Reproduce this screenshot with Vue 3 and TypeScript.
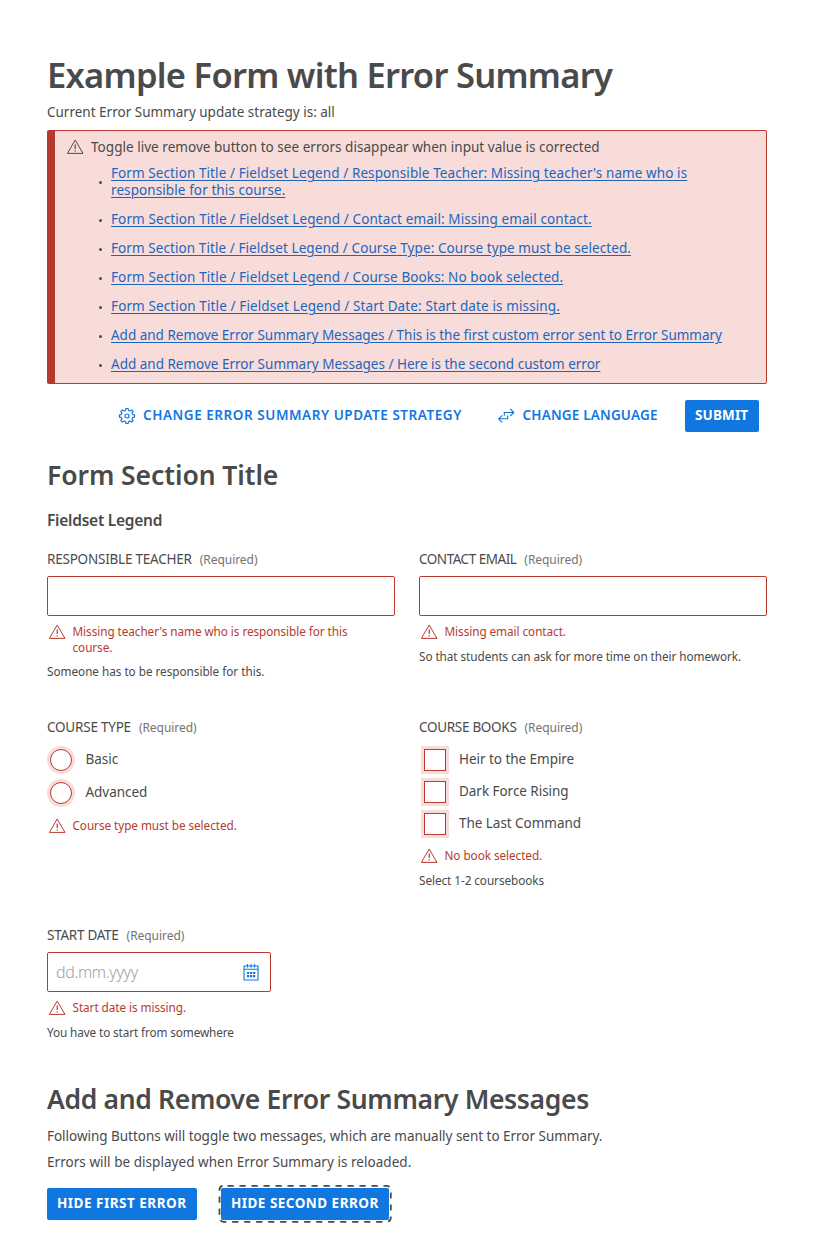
<script setup lang="ts">
import { defineComponent, h } from 'vue'

interface Summary { text: string; cls: string }

const WarnIcon = defineComponent({
  render: () =>
    h('svg', { class: 'warn', viewBox: '0 0 18 16', width: 18, height: 16, fill: 'none', stroke: 'currentColor' }, [
      h('path', { d: 'M9.2 1 L17 14.4 H1.4 Z', 'stroke-linejoin': 'round', 'stroke-width': 1 }),
      h('path', { d: 'M9.2 5.6 V10 M9.2 11.2 V12.6', 'stroke-width': 1.2 }),
    ]),
})

// Eight-tooth cog outline centred on (9, 9).
function cogPath(): string {
  const pt = (r: number, deg: number): string => {
    const a = (deg * Math.PI) / 180
    return `${(9 + r * Math.cos(a)).toFixed(2)} ${(9 + r * Math.sin(a)).toFixed(2)}`
  }
  const parts: string[] = []
  for (let i = 0; i < 8; i++) {
    const c = i * 45
    parts.push(`${i === 0 ? 'M' : 'L'}${pt(6, c - 13)} L${pt(7.6, c - 9)} L${pt(7.6, c + 9)} L${pt(6, c + 13)} Q${pt(5.4, c + 22.5)} ${pt(6, c + 32)}`)
  }
  return parts.join(' ') + ' Z'
}
const cog = cogPath()

const prefix = 'Form Section Title / Fieldset Legend / '
const custom = 'Add and Remove Error Summary Messages / '
const messages: Summary[] = [
  { text: prefix + "Responsible Teacher: Missing teacher's name who is responsible for this course.", cls: 'm1' },
  { text: prefix + 'Contact email: Missing email contact.', cls: 'm2' },
  { text: prefix + 'Course Type: Course type must be selected.', cls: 'm3' },
  { text: prefix + 'Course Books: No book selected.', cls: 'm4' },
  { text: prefix + 'Start Date: Start date is missing.', cls: 'm5' },
  { text: custom + 'This is the first custom error sent to Error Summary', cls: 'm6' },
  { text: custom + 'Here is the second custom error', cls: 'm7' },
]
const courseTypes: string[] = ['Basic', 'Advanced']
const books: string[] = ['Heir to the Empire', 'Dark Force Rising', 'The Last Command']
</script>

<template>
  <main class="page">
    <h1>Example Form with Error Summary</h1>
    <p class="strategy">Current Error Summary update strategy is: all</p>

    <section class="summary">
      <div class="summary-title"><WarnIcon /><span>Toggle live remove button to see errors disappear when input value is corrected</span></div>
      <ul>
        <li v-for="m in messages" :key="m.cls"><a href="#" :class="m.cls">{{ m.text }}</a></li>
      </ul>
    </section>

    <div class="actions">
      <button class="link strategy-btn">
        <svg width="18" height="18" viewBox="0 0 18 18" fill="none" stroke="currentColor" stroke-width="1.2" stroke-linejoin="round">
          <path :d="cog" />
          <circle cx="9" cy="9" r="2" />
        </svg>
        <span>CHANGE ERROR SUMMARY UPDATE STRATEGY</span>
      </button>
      <button class="link language-btn">
        <svg width="18" height="16" viewBox="0 0 18 16" fill="none" stroke="currentColor" stroke-width="1.1">
          <path d="M6.3 7.700V4.500H15.700M12.300 1L15.800 4.500L12.300 8M9.700 7.500V10.800H.900M4.200 7.300L.700 10.800L4.200 14.300" />
        </svg>
        <span>CHANGE LANGUAGE</span>
      </button>
      <button class="primary submit"><span>SUBMIT</span></button>
    </div>

    <h2 class="section-title">Form Section Title</h2>
    <h3>Fieldset Legend</h3>

    <div class="grid">
      <div class="field teacher">
        <label><span class="name">RESPONSIBLE TEACHER</span><span class="req">(Required)</span></label>
        <input class="box" type="text" />
        <div class="error"><WarnIcon /><span>Missing teacher's name who is responsible for this course.</span></div>
        <p class="help">Someone has to be responsible for this.</p>
      </div>
      <div class="field email">
        <label><span class="name">CONTACT EMAIL</span><span class="req">(Required)</span></label>
        <input class="box" type="text" />
        <div class="error"><WarnIcon /><span>Missing email contact.</span></div>
        <p class="help">So that students can ask for more time on their homework.</p>
      </div>
      <div class="field type">
        <label><span class="name">COURSE TYPE</span><span class="req">(Required)</span></label>
        <div class="radios">
          <div v-for="t in courseTypes" :key="t" class="choice"><i class="radio"></i><span>{{ t }}</span></div>
        </div>
        <div class="error"><WarnIcon /><span>Course type must be selected.</span></div>
      </div>
      <div class="field books">
        <label><span class="name">COURSE BOOKS</span><span class="req">(Required)</span></label>
        <div class="checks">
          <div v-for="b in books" :key="b" class="choice"><i class="check"></i><span>{{ b }}</span></div>
        </div>
        <div class="error"><WarnIcon /><span>No book selected.</span></div>
        <p class="help">Select 1-2 coursebooks</p>
      </div>
      <div class="field date">
        <label><span class="name">START DATE</span><span class="req">(Required)</span></label>
        <div class="box date-box">
          <input type="text" placeholder="dd.mm.yyyy" />
          <svg width="16" height="18" viewBox="0 0 16 18" fill="none" stroke="currentColor">
            <path d="M1 3H15V17H1zM1 6.300H15M4.500 1V4.500M8 1V4.500M11.500 1V4.500" stroke-width="1.100" />
            <path d="M4 10h2.200m.8 0h2.200m.8 0h2.200M4 13.200h2.200m.8 0h2.200m.8 0h2.200" stroke-width="2.200" />
          </svg>
        </div>
        <div class="error"><WarnIcon /><span>Start date is missing.</span></div>
        <p class="help">You have to start from somewhere</p>
      </div>
    </div>

    <h2 class="toggle-title">Add and Remove Error Summary Messages</h2>
    <p class="para p1">Following Buttons will toggle two messages, which are manually sent to Error Summary.</p>
    <p class="para p2">Errors will be displayed when Error Summary is reloaded.</p>
    <div class="toggles">
      <button class="primary first"><span>HIDE FIRST ERROR</span></button>
      <button class="primary second">
        <span>HIDE SECOND ERROR</span>
        <svg class="focus" width="174" height="40" viewBox="0 0 174 40" fill="none" stroke="#4a4a4a" stroke-width="1.8">
          <rect x="1.5" y="1.800" width="171.300" height="36" rx="4" stroke-dasharray="6.200 5.800" stroke-dashoffset="-4" />
        </svg>
      </button>
    </div>
  </main>
</template>

<style>
body { background: #fff; }
</style>

<style scoped>
* { box-sizing: border-box; }
.page { width: 814px; height: 1252px; padding: 54px 47px 0; color: #4a4a4a; font: 400 13.5px/18px "Noto Sans", sans-serif; overflow: hidden; white-space: nowrap; }
h1, h2, h3, p, ul { margin: 0; padding: 0; }
h1 { height: 44px; font-size: 34.5px; line-height: 42px; font-weight: 600; letter-spacing: -0.73px; }
.strategy { margin-top: 5px; height: 27px; }
.summary { height: 254px; border: 1px solid #b83a2e; border-left-width: 8px; border-radius: 2px; background: #f8dcd9; padding: 7px 0 0 11px; }
.summary-title { display: flex; align-items: center; gap: 7px; height: 18px; letter-spacing: 0.035px; }
.summary ul { list-style: none; margin-top: 9px; padding-left: 45px; }
.summary li { position: relative; width: 640px; white-space: normal; line-height: 17px; margin-bottom: 12px; }
.summary li::before { content: ""; position: absolute; left: -12px; top: calc(50% - 1px); width: 3px; height: 3px; border-radius: 50%; background: #4a4a4a; }
.summary a { color: #1c66bd; text-decoration: underline; text-underline-offset: 2px; text-decoration-thickness: 1px; }
.m2, .m4 { letter-spacing: 0.105px; }
.m1 { letter-spacing: 0.09px; }
.m3 { letter-spacing: 0.08px; }
.m5 { letter-spacing: 0.12px; }
.m6 { letter-spacing: -0.01px; }
button { border: 0; background: none; padding: 0; font: 600 13.5px/32px "Noto Sans", sans-serif; }
button span { line-height: 30px; display: block; height: 32px; }
.actions { display: flex; justify-content: flex-end; margin-top: 16px; padding-right: 8px; height: 32px; }
.link { display: flex; align-items: center; color: #1177e0; text-align: left; }
.strategy-btn { width: 345px; gap: 7px; letter-spacing: 0.55px; }
.language-btn { margin-left: 35px; width: 161px; gap: 6.5px; letter-spacing: 0.18px; }
.primary { height: 32px; border-radius: 2px; background: #1177e0; color: #fff; font-weight: 700; text-align: left; padding-left: 10px; }
.submit { width: 74px; margin-left: 26px; letter-spacing: 0.15px; }
h2 { font-size: 26.5px; line-height: 36px; font-weight: 600; }
.section-title { margin-top: 25px; letter-spacing: -0.07px; }
h3 { margin-top: 17px; font-size: 15.5px; line-height: 20px; font-weight: 600; letter-spacing: -0.24px; }
.grid { display: grid; grid-template-columns: 348px 348px; column-gap: 24px; grid-template-rows: 168px 208px 148px; margin-top: 19px; }
label { display: flex; align-items: center; gap: 8px; height: 20px; }
.name { letter-spacing: -0.22px; }
.email .name { letter-spacing: -0.48px; }
.books .name { letter-spacing: -0.3px; }
.date .name { letter-spacing: -0.27px; }
.req { font-size: 12px; color: #737373; padding-top: 1px; letter-spacing: -0.05px; }
.box { display: block; width: 100%; height: 40px; margin-top: 7px; border: 1px solid #b83a2e; border-radius: 2px; background: #fff; }
.error { display: flex; align-items: flex-start; gap: 6.5px; color: #b83a2e; font-size: 11.75px; line-height: 16px; margin-top: 7px; padding-left: 1px; letter-spacing: -0.06px; }
.error span { white-space: normal; max-width: 290px; }
.error .warn { margin: 1px 0 0 -0.5px; flex: none; }
.error span { padding-left: 0.5px; }
.help { font-size: 11.75px; line-height: 16px; margin-top: 8px; letter-spacing: -0.06px; }
.teacher .help { letter-spacing: -0.03px; }
.date .help { letter-spacing: -0.11px; }
.choice { display: flex; align-items: center; }
.choice span { margin-top: -2px; letter-spacing: -0.04px; }
.radio, .check { width: 22px; height: 22px; border: 1px solid #b83a2e; background: #fff; box-shadow: 0 0 0 3px #f8dcd9; }
.radio { border-radius: 50%; margin: 0 13.5px 0 3px; }
.check { margin: 0 13px 0 5px; }
.radios { margin-top: 6px; }
.radios .choice { height: 33px; }
.radios + .error { margin-top: 8px; }
.checks { margin-top: 7px; }
.checks .choice { height: 32px; }
.checks + .error { margin-top: 7px; }
.date-box { width: 224px; display: flex; align-items: center; padding: 0 11px 0 8px; justify-content: space-between; color: #1177e0; }
.date-box input { width: 140px; border: 0; padding: 0; outline: 0; background: none; font: 300 16px/20px "Noto Sans", sans-serif; letter-spacing: -0.38px; }
.date-box input::placeholder { color: #a0a0a0; opacity: 1; }
.toggle-title { margin-top: 8px; letter-spacing: -0.33px; }
.para { line-height: 20px; margin-top: 9px; }
.p1 { letter-spacing: -0.025px; }
.p2 { margin-top: 6px; letter-spacing: 0.04px; }
.toggles { display: flex; gap: 24px; margin-top: 16px; }
.first { width: 150px; letter-spacing: 0.5px; }
.second { position: relative; width: 168px; letter-spacing: 0.47px; }
.focus { position: absolute; left: -3px; top: -4px; }
</style>
